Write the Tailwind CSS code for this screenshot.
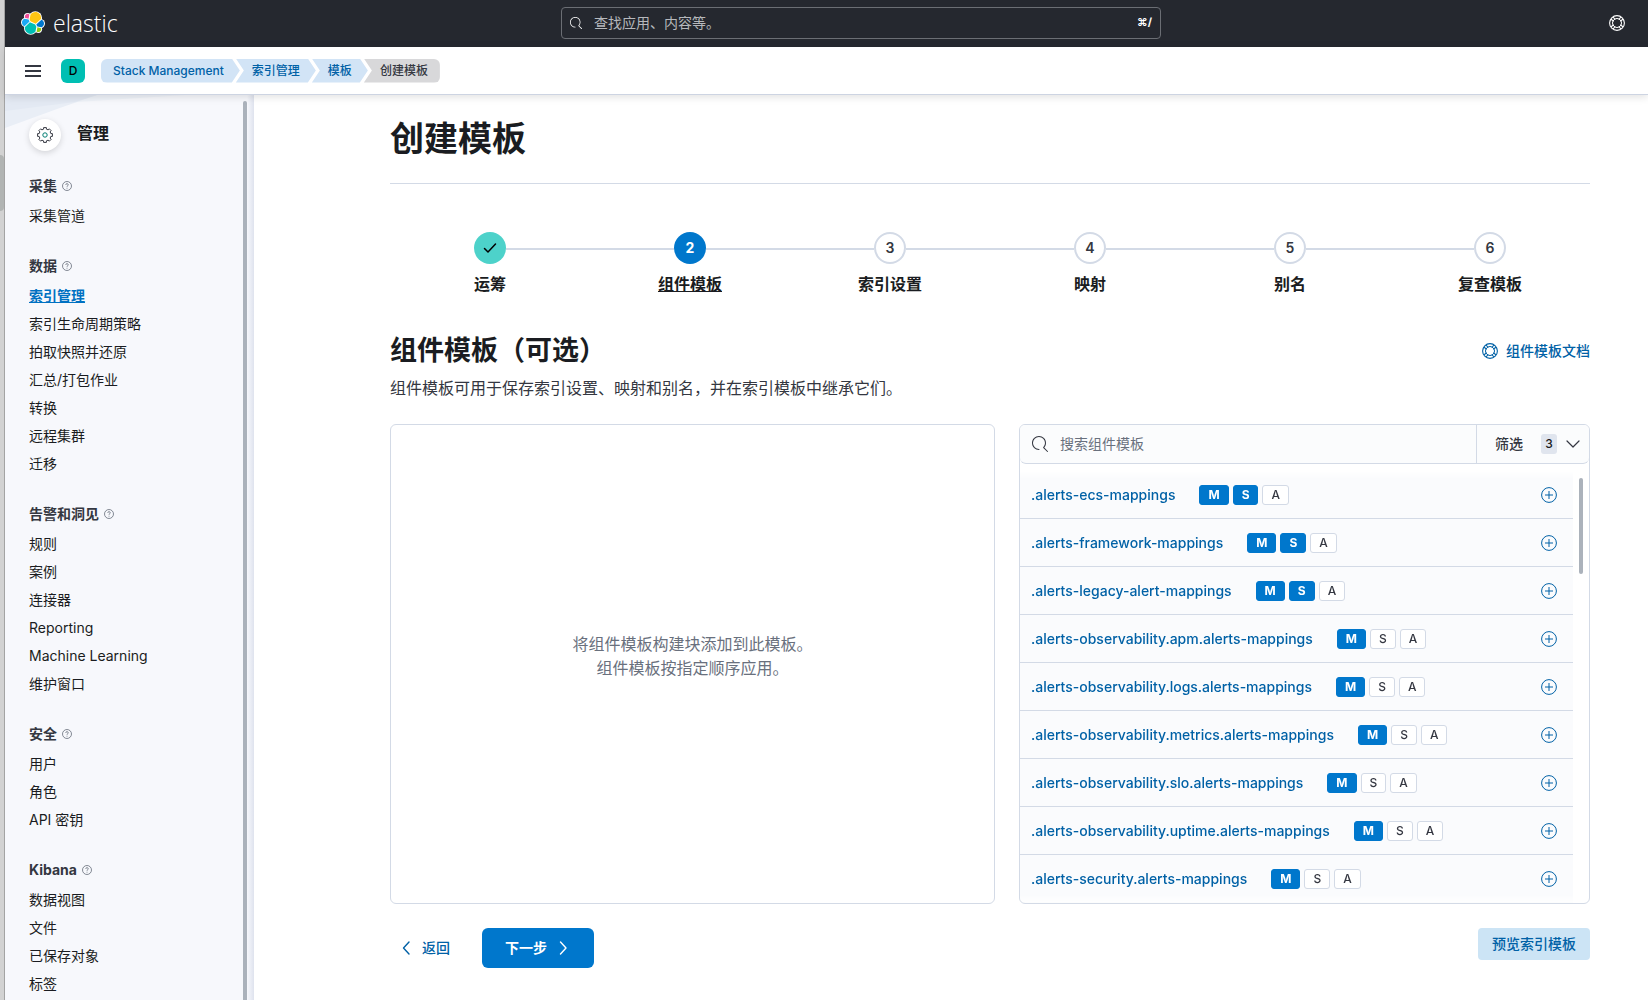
<!DOCTYPE html>
<html lang="zh-CN">
<head>
<meta charset="utf-8">
<meta name="viewport" content="width=device-width, initial-scale=1">
<title>创建模板 - Elastic</title>
<script src="https://cdn.jsdelivr.net/npm/@tailwindcss/browser@4"></script>
</head>
<body class="flex min-h-screen bg-white font-['Inter','Noto_Sans_CJK_SC',sans-serif] text-sm text-[#343741]">

<!-- shared icons -->
<svg class="hidden" aria-hidden="true">
  <symbol id="i-search" viewBox="0 0 16 16"><path fill="currentColor" d="M11.271 11.978l3.872 3.873a.502.502 0 00.708 0 .502.502 0 000-.708l-3.565-3.564c2.38-2.747 2.267-6.923-.342-9.532-2.73-2.73-7.17-2.73-9.898 0-2.728 2.729-2.728 7.17 0 9.9a6.955 6.955 0 004.949 2.05.5.5 0 000-1 5.96 5.96 0 01-4.242-1.757 6.01 6.01 0 010-8.486 6.004 6.004 0 018.484 0 6.01 6.01 0 010 8.486.5.5 0 000 .738z"/></symbol>
  <symbol id="i-help" viewBox="0 0 16 16"><g fill="none" stroke="currentColor"><circle cx="8" cy="8" r="7.4" stroke-width="1.1"/><circle cx="8" cy="8" r="4.5"/><path stroke-width="1.1" d="M2 4.200l2.800 2M4.200 2l2 2.800M14 4.200l-2.800 2M11.800 2l-2 2.800M2 11.800l2.800-2M4.200 14l2-2.800M14 11.800l-2.800-2M11.800 14l-2-2.800"/></g></symbol>
  <symbol id="i-question" viewBox="0 0 16 16"><g fill="none" stroke="currentColor" stroke-width="1.3"><circle cx="8" cy="8" r="7.2"/><path d="M6 6.2C6 4.9 6.8 4.2 8 4.2s2 .8 2 1.8c0 1.500-2 1.600-2 3.300M8 10.800v1.400"/></g></symbol>
  <symbol id="i-plus" viewBox="0 0 16 16"><g fill="none" stroke="currentColor"><circle cx="8" cy="8" r="7.400"/><path d="M8 4v8M4 8h8"/></g></symbol>
</svg>

<!-- edge of the outer page with its scroll thumb -->
<div class="w-[5px] shrink-0 border-r border-[#a3a3a3] bg-[#d2d2d2] pt-[155px]"><div class="h-14 rounded-r bg-[#b1b4b3]"></div></div>

<div class="flex min-w-0 flex-1 flex-col">
  <header class="relative z-10">
    <div class="grid h-[47px] grid-cols-[556fr_600px_487fr] items-center bg-[#25282f] pb-px">
      <a href="#" class="flex items-center gap-2 pl-4 text-white" aria-label="Elastic">
        <svg class="size-6" viewBox="0 0 32 32">
          <g fill="#fff"><circle cx="19.100" cy="9.200" r="9"/><circle cx="8.800" cy="7.500" r="4.900"/><circle cx="6.300" cy="15.200" r="6.300"/><circle cx="12.900" cy="22.800" r="9"/><circle cx="25.700" cy="16.800" r="6.300"/><circle cx="23.200" cy="24.300" r="4.900"/></g>
          <path fill="#fec514" d="M12.580 13.787l7.002 3.211 7.066-6.213a7.850 7.850 0 0 0 .152-1.557c0-4.287-3.464-7.773-7.720-7.773-2.545 0-4.920 1.260-6.357 3.368L11.550 10.950l1.030 2.837z"/>
          <path fill="#00bfb3" d="M5.333 21.228A7.964 7.964 0 0 0 5.180 22.800c0 4.300 3.475 7.796 7.742 7.796 2.556 0 4.942-1.273 6.385-3.396l1.166-6.114-1.556-2.990-7.030-3.220-6.554 6.352z"/>
          <path fill="#f04e98" d="M5.288 9.067l4.800 1.137 1.050-5.493a3.790 3.790 0 0 0-5.850 4.356z"/>
          <path fill="#1ba9f5" d="M4.872 10.214c-2.144.713-3.590 2.770-3.590 5.048 0 2.220 1.363 4.200 3.406 4.983l6.733-6.118-1.236-2.655-5.313-1.258z"/>
          <path fill="#93c90e" d="M20.868 27.196a3.730 3.730 0 0 0 2.281.785 3.790 3.790 0 0 0 3.558-5.139l-4.787-1.127-1.052 5.481z"/>
          <path fill="#0077cc" d="M21.848 20.563l5.270 1.240c2.144-.713 3.590-2.770 3.590-5.047 0-2.216-1.367-4.192-3.415-4.974l-6.893 6.080 1.448 2.701z"/>
        </svg>
        <span class="font-['Open_Sans',sans-serif] text-[23px] leading-6 font-light">elastic</span>
      </a>
      <label class="flex h-8 items-center rounded border border-[#6b6e74] pr-2 pl-2">
        <svg class="size-3 shrink-0 text-white"><use href="#i-search"/></svg>
        <input type="search" aria-label="查找应用、内容等" placeholder="查找应用、内容等。" class="ml-3 min-w-0 flex-1 bg-transparent text-sm text-white outline-none placeholder:text-[#b6b8bc]">
        <span class="font-['Inter','DejaVu_Sans',sans-serif] text-[11px] font-bold text-white">⌘/</span>
      </label>
      <div class="flex justify-end pr-[23px]"><button type="button" aria-label="帮助" class="text-white"><svg class="block size-4"><use href="#i-help"/></svg></button></div>
    </div>
    <div class="flex h-12 items-center border-b border-[#cdd4e2] bg-white shadow-[0_2px_8px_rgba(0,0,0,0.12)]">
      <button type="button" aria-label="菜单" class="ml-5 flex w-4 flex-col gap-[3px]"><span class="h-0.5 bg-[#343741]"></span><span class="h-0.5 bg-[#343741]"></span><span class="h-0.5 bg-[#343741]"></span></button>
      <button type="button" class="ml-5 size-6 rounded-md bg-[#00bfb3] text-xs font-medium text-black">D</button>
      <nav aria-label="面包屑" class="ml-4 flex text-xs leading-6 font-medium whitespace-nowrap text-[#0061a6]">
        <a href="#" class="rounded-l-md bg-[#d2e4f6] pr-4 pl-3 [clip-path:polygon(0_0,calc(100%-8px)_0,100%_50%,calc(100%-8px)_100%,0_100%)]">Stack Management</a>
        <a href="#" class="-ml-1 bg-[#d2e4f6] px-4 [clip-path:polygon(0_0,calc(100%-8px)_0,100%_50%,calc(100%-8px)_100%,0_100%,8px_50%)]">索引管理</a>
        <a href="#" class="-ml-1 bg-[#d2e4f6] px-4 [clip-path:polygon(0_0,calc(100%-8px)_0,100%_50%,calc(100%-8px)_100%,0_100%,8px_50%)]">模板</a>
        <span aria-current="page" class="-ml-1 rounded-r-md bg-[#d8d8da] pr-3 pl-4 text-[#343741] [clip-path:polygon(0_0,100%_0,100%_100%,0_100%,8px_50%)]">创建模板</span>
      </nav>
    </div>
  </header>

  <div class="flex flex-1">
    <aside class="relative flex w-[249px] shrink-0 bg-[#f7f8fc]">
      <svg class="absolute top-0 left-0 h-9 w-[180px]" viewBox="0 0 180 36" aria-hidden="true"><path fill="#eff3f9" d="M0 0h180L72 7 0 16z"/><path fill="#e9eef6" d="M0 0h92L52 14 0 33z"/><path fill="#e3e9f3" d="M0 0h92L70 7 0 16z"/></svg>
      <div class="relative flex-1 pt-6 pl-6">
        <div class="flex items-start">
          <span class="grid size-8 place-items-center rounded-full bg-white shadow-[0_2px_6px_rgba(0,0,0,0.15)]">
            <svg class="size-4" viewBox="-8 -8 16 16" fill="none"><path stroke="#343741" stroke-linejoin="round" d="M-1.400-5.850V-7.400H1.400V-5.850L3.150-5.130 4.240-6.220 6.220-4.240 5.130-3.150 5.850-1.400H7.400V1.400H5.850L5.130 3.150 6.220 4.240 4.240 6.220 3.150 5.130 1.400 5.850V7.400H-1.400V5.850L-3.150 5.130-4.240 6.220-6.220 4.240-5.130 3.150-5.850 1.400H-7.400V-1.400H-5.850L-5.130-3.150-6.220-4.240-4.240-6.220-3.150-5.130Z"/><circle r="2.200" stroke="#017d73"/></svg>
          </span>
          <h2 class="ml-4 text-base leading-7 font-bold text-[#1a1c21]">管理</h2>
        </div>
        <nav id="side" aria-label="管理" class="mt-[25px] flex flex-col gap-[26px]"></nav>
      </div>
      <div class="mt-1.5 w-[4px] rounded-t bg-[#abb2bb]"></div>
      <div class="w-[7px] bg-linear-to-r from-[#f7f8fc] to-[#dfe3ee]"></div>
    </aside>

    <main class="min-w-0 flex-1 pt-6 pr-[58px] pb-7 pl-[136px]">
      <h1 class="border-b border-[#d3dae6] pb-6 text-[34px] leading-10 font-bold text-[#1a1c21]">创建模板</h1>

      <ol id="steps" class="mt-12 grid grid-cols-6"></ol>

      <div class="mt-10 flex items-center justify-between">
        <h2 class="text-[27px] leading-[34px] font-bold text-[#1a1c21]">组件模板（可选）</h2>
        <a href="#" class="flex items-center gap-2 font-medium text-[#0061a6]"><svg class="size-4"><use href="#i-help"/></svg>组件模板文档</a>
      </div>
      <p class="mt-2 text-base leading-6">组件模板可用于保存索引设置、映射和别名，并在索引模板中继承它们。</p>

      <div class="mt-6 grid h-[480px] grid-cols-[605fr_571fr] gap-6">
        <section class="flex items-center justify-center rounded-md border border-[#d3dae6] pb-4 text-center text-base leading-6 text-[#69707d]">
          <p>将组件模板构建块添加到此模板。<br>组件模板按指定顺序应用。</p>
        </section>
        <section class="relative flex min-w-0 flex-col overflow-hidden rounded-md border border-[#d3dae6]">
          <div class="flex h-[39px] shrink-0 rounded-b-md border-b border-[#d3dae6] bg-[#fbfcfd]">
            <label class="flex min-w-0 flex-1 items-center pl-3">
              <svg class="size-4 shrink-0 text-[#343741]"><use href="#i-search"/></svg>
              <input type="search" aria-label="搜索组件模板" placeholder="搜索组件模板" class="ml-3 min-w-0 flex-1 bg-transparent text-sm outline-none placeholder:text-[#69707d]">
            </label>
            <button type="button" class="flex w-[113px] items-center border-l border-[#d3dae6] pl-[18px] font-medium text-[#343741]">筛选
              <span class="ml-[18px] h-5 w-4 rounded-[3px] bg-[#e0e5ee] text-center text-xs leading-5 text-[#1a1c21]">3</span>
              <svg class="ml-2 size-4" viewBox="0 0 16 16" fill="none" stroke="currentColor" stroke-width="1.200" stroke-linecap="round" stroke-linejoin="round"><path d="M2 5l6 6 6-6"/></svg>
            </button>
          </div>
          <ul id="list" class="mt-[7px] mr-4 flex-1 overflow-hidden mask-[linear-gradient(transparent,black_8px,black_calc(100%-8px),transparent)]"></ul>
          <div class="absolute top-[53px] right-1.5 h-24 w-1 rounded bg-[#abb2bb]"></div>
        </section>
      </div>

      <div class="mt-6 flex items-start">
        <button type="button" class="flex h-10 w-[92px] items-center pl-2 font-medium text-[#0061a6]"><svg class="size-4" viewBox="0 0 16 16" fill="none" stroke="currentColor" stroke-width="1.400" stroke-linecap="round" stroke-linejoin="round"><path d="M11 2L5.500 8 11 14"/></svg><span class="ml-2">返回</span></button>
        <button type="button" class="flex h-10 w-28 items-center justify-center gap-2 rounded-md bg-[#0077cc] font-bold text-white">下一步<svg class="size-4" viewBox="0 0 16 16" fill="none" stroke="currentColor" stroke-width="1.400" stroke-linecap="round" stroke-linejoin="round"><path d="M5.500 2L11 8 5.500 14"/></svg></button>
        <button type="button" class="ml-auto h-8 w-28 rounded bg-[#cce4f5] font-medium text-[#0061a6]">预览索引模板</button>
      </div>
    </main>
  </div>
</div>

<script>
const groups = [
  ['采集', ['采集管道']],
  ['数据', ['索引管理', '索引生命周期策略', '拍取快照并还原', '汇总/打包作业', '转换', '远程集群', '迁移']],
  ['告警和洞见', ['规则', '案例', '连接器', 'Reporting', 'Machine Learning', '维护窗口']],
  ['安全', ['用户', '角色', 'API 密钥']],
  ['Kibana', ['数据视图', '文件', '已保存对象', '标签']],
];
const link = t => t === '索引管理'
  ? `<li><a href="#" aria-current="page" class="font-bold text-[#0071c2] underline">${t}</a></li>`
  : `<li><a href="#" class="text-[#1a1c21]">${t}</a></li>`;
document.getElementById('side').innerHTML = groups.map(([h, items]) => `
  <section><h3 class="flex items-center gap-[5px] leading-5 font-bold">${h}<svg class="size-[10px] text-[#69707d]"><use href="#i-question"/></svg></h3>
  <ul class="mt-1.5 leading-7">${items.map(link).join('')}</ul></section>`).join('');

const steps = ['运筹', '组件模板', '索引设置', '映射', '别名', '复查模板'];
const check = '<svg class="size-4" viewBox="0 0 16 16" fill="none" stroke="currentColor" stroke-width="1.500" stroke-linecap="round" stroke-linejoin="round"><path d="M2.500 8.500L6 12l7.500-8"/></svg>';
document.getElementById('steps').innerHTML = steps.map((s, i) => {
  const dot = i === 0 ? 'bg-[#4dd2ca] text-black' : i === 1 ? 'bg-[#0077cc] font-bold text-white' : 'border-2 border-[#d3dae6] font-semibold text-[#343741]';
  return `<li><button type="button" class="flex w-full flex-col"><span class="flex w-full items-center">
    <span class="mt-0.5 h-0.5 flex-1 ${i === 0 ? '' : 'bg-[#d3dae6]'}"></span>
    <span class="grid size-8 place-items-center rounded-full ${dot}">${i === 0 ? check : i + 1}</span>
    <span class="mt-0.5 h-0.5 flex-1 ${i === 5 ? '' : 'bg-[#d3dae6]'}"></span></span>
    <span class="mt-2.5 w-full text-center text-base leading-5 font-bold text-[#1a1c21] ${i === 1 ? 'underline' : ''}">${s}</span></button></li>`;
}).join('');

const rows = [['ecs-mappings', 2], ['framework-mappings', 2], ['legacy-alert-mappings', 2], ['observability.apm.alerts-mappings', 1], ['observability.logs.alerts-mappings', 1], ['observability.metrics.alerts-mappings', 1], ['observability.slo.alerts-mappings', 1], ['observability.uptime.alerts-mappings', 1], ['security.alerts-mappings', 1]];
const badge = (c, on) => `<span class="h-5 rounded-[3px] border px-2 text-xs leading-[18px] ${on ? 'border-[#0077cc] bg-[#0077cc] font-bold text-white' : 'border-[#d3dae6] bg-white font-medium'}">${c}</span>`;
document.getElementById('list').innerHTML = rows.map(([n, k]) => `
  <li class="flex h-12 items-center border-b border-[#d3dae6] bg-[#fafbfd] pr-4 pl-[11px]">
    <a href="#" class="font-medium text-[#0061a6]">.alerts-${n}</a>
    <span class="ml-6 flex gap-1">${[...'MSA'].map((c, i) => badge(c, i < k)).join('')}</span>
    <button type="button" aria-label="添加" class="ml-auto text-[#0061a6]"><svg class="block size-4"><use href="#i-plus"/></svg></button>
  </li>`).join('');
</script>
</body>
</html>
